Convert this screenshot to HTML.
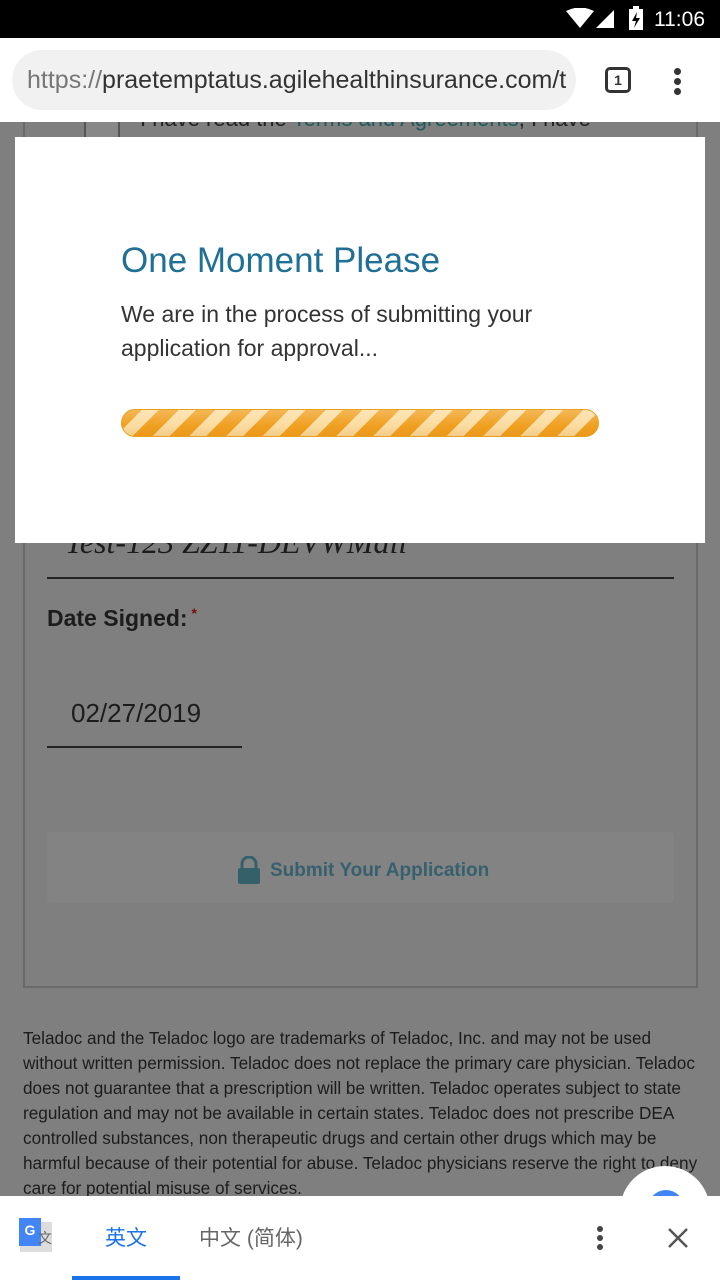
<!DOCTYPE html>
<html><head><meta charset="utf-8"><style>
*{margin:0;padding:0;box-sizing:border-box}
body{width:720px;height:1280px;position:relative;overflow:hidden;font-family:"Liberation Sans",sans-serif;background:#7f7f7f}
.status{position:absolute;top:0;left:0;width:720px;height:38px;background:#000;color:#fff;font-size:20px;z-index:5}
.bar{position:absolute;top:38px;left:0;width:720px;height:84px;background:#fff;z-index:5}
.url{position:absolute;left:12px;top:12px;width:564px;height:60px;border-radius:30px;background:#f1f1f1;font-size:25px;line-height:60px;padding-left:15px;color:#333;white-space:nowrap;overflow:hidden}
.abs{position:absolute}
.modal{position:absolute;left:15px;top:137px;width:690px;height:406px;background:#fff}
.pb{position:absolute;left:121px;top:409px;width:478px;height:28px;border-radius:14px;border:1px solid #e8a020;
background:linear-gradient(rgba(255,255,255,.25),rgba(255,255,255,0) 60%,rgba(200,110,0,.15)),repeating-linear-gradient(135deg,#f0a020 0 14px,#fbdca0 14px 26px)}
.foot{position:absolute;left:23px;top:1026px;width:680px;font-size:17.2px;line-height:25px;color:#1c1c1c}
.tb{position:absolute;left:0;top:1196px;width:720px;height:84px;background:#fff}
</style></head><body>
<div class="status">
<svg class="abs" style="left:566px;top:8px" width="50" height="22"><path d="M0 3 Q14 -4 28 3 L14 20Z" fill="#fff"/><path d="M30 20 L48 2 L48 20Z" fill="#fff"/></svg>
<svg class="abs" style="left:628px;top:6px" width="16" height="24"><rect x="1" y="3" width="14" height="21" fill="#fff"/><rect x="5" y="0" width="6" height="4" fill="#fff"/><path d="M9 6 L4 15 L8 15 L6 22 L12 12 L8 12Z" fill="#000"/></svg>
<div class="abs" style="left:654px;top:8px;font-size:21px">11:06</div>
</div>
<div class="bar">
<div class="url"><span style="color:#777">https://</span>praetemptatus.agilehealthinsurance.com/t</div>
<div class="abs" style="left:605px;top:29px;width:26px;height:26px;border:3px solid #333;border-radius:5px;font-size:14px;font-weight:bold;text-align:center;line-height:20px;color:#333">1</div>
<div class="abs" style="left:674px;top:30px;width:7px;height:7px;border-radius:50%;background:#333;box-shadow:0 10px 0 #333,0 20px 0 #333"></div>
</div>
<div class="abs" style="left:23px;top:100px;width:675px;height:888px;border:2px solid #6a6a6a;border-top:none"></div>
<div class="abs" style="left:84px;top:118px;width:36px;height:30px;border:2px solid #555;background:#888"></div>
<div class="abs" style="left:140px;top:106px;font-size:22px;color:#222">I have read the <span style="color:#1d5a5e">Terms and Agreements</span>, I have</div>
<div class="abs" style="left:65px;top:524px;font-size:32px;font-style:italic;font-family:'Liberation Serif',serif;color:#1c1c1c">Test-123 ZZ11-DEVWMail</div>
<div class="abs" style="left:47px;top:577px;width:627px;height:2px;background:#222"></div>
<div class="abs" style="left:47px;top:605px;font-size:23px;font-weight:bold;color:#1c1c1c">Date Signed:<span style="color:#7a1010;font-size:14px;vertical-align:top"> *</span></div>
<div class="abs" style="left:71px;top:698px;font-size:26px;color:#1c1c1c">02/27/2019</div>
<div class="abs" style="left:47px;top:746px;width:195px;height:2px;background:#222"></div>
<div class="abs" style="left:47px;top:832px;width:627px;height:71px;background:#838383;border-radius:4px"></div>
<svg class="abs" style="left:236px;top:856px" width="26" height="28"><path d="M6 12 V8 a7 7 0 0 1 14 0 V12" stroke="#34606a" stroke-width="3" fill="none"/><rect x="2" y="12" width="22" height="16" rx="2" fill="#34606a"/></svg>
<div class="abs" style="left:270px;top:860px;font-size:19px;font-weight:bold;color:#36606e">Submit Your Application</div>
<div class="foot">Teladoc and the Teladoc logo are trademarks of Teladoc, Inc. and may not be used without written permission. Teladoc does not replace the primary care physician. Teladoc does not guarantee that a prescription will be written. Teladoc operates subject to state regulation and may not be available in certain states. Teladoc does not prescribe DEA controlled substances, non therapeutic drugs and certain other drugs which may be harmful because of their potential for abuse. Teladoc physicians reserve the right to deny care for potential misuse of services.</div>
<div class="abs" style="left:620px;top:1166px;width:90px;height:90px;border-radius:50%;background:#fff"></div>
<div class="abs" style="left:648px;top:1190px;width:36px;height:36px;border-radius:50%;background:#4285f4"></div>
<div class="modal">
<div class="abs" style="left:106px;top:104px;font-size:35px;color:#1f6f96">One Moment Please</div>
<div class="abs" style="left:106px;top:160px;width:460px;font-size:23px;line-height:34px;color:#333">We are in the process of submitting your application for approval...</div>
</div>
<div class="pb"></div>
<div class="tb">
<div class="abs" style="left:20px;top:26px;width:32px;height:30px;background:#ddd"></div>
<div class="abs" style="left:19px;top:22px;width:22px;height:28px;background:#4285f4;color:#fff;font-size:14px;font-weight:bold;text-align:center;line-height:24px">G</div>
<div class="abs" style="left:38px;top:32px;font-size:14px;color:#666;font-family:'Noto Sans CJK SC',sans-serif">文</div>
<div class="abs" style="left:105px;top:26px;font-size:21px;color:#1a73e8;font-family:'Liberation Sans','Noto Sans CJK SC',sans-serif">英文</div>
<div class="abs" style="left:199px;top:26px;font-size:21px;color:#666;font-family:'Liberation Sans','Noto Sans CJK SC',sans-serif">中文 (简体)</div>
<div class="abs" style="left:72px;top:80px;width:108px;height:4px;background:#1a73e8"></div>
<div class="abs" style="left:597px;top:30px;width:6px;height:6px;border-radius:50%;background:#444;box-shadow:0 9px 0 #444,0 18px 0 #444"></div>
<svg class="abs" style="left:667px;top:31px" width="22" height="22"><path d="M2 2 L20 20 M20 2 L2 20" stroke="#555" stroke-width="2.5"/></svg>
</div>
</body></html>
